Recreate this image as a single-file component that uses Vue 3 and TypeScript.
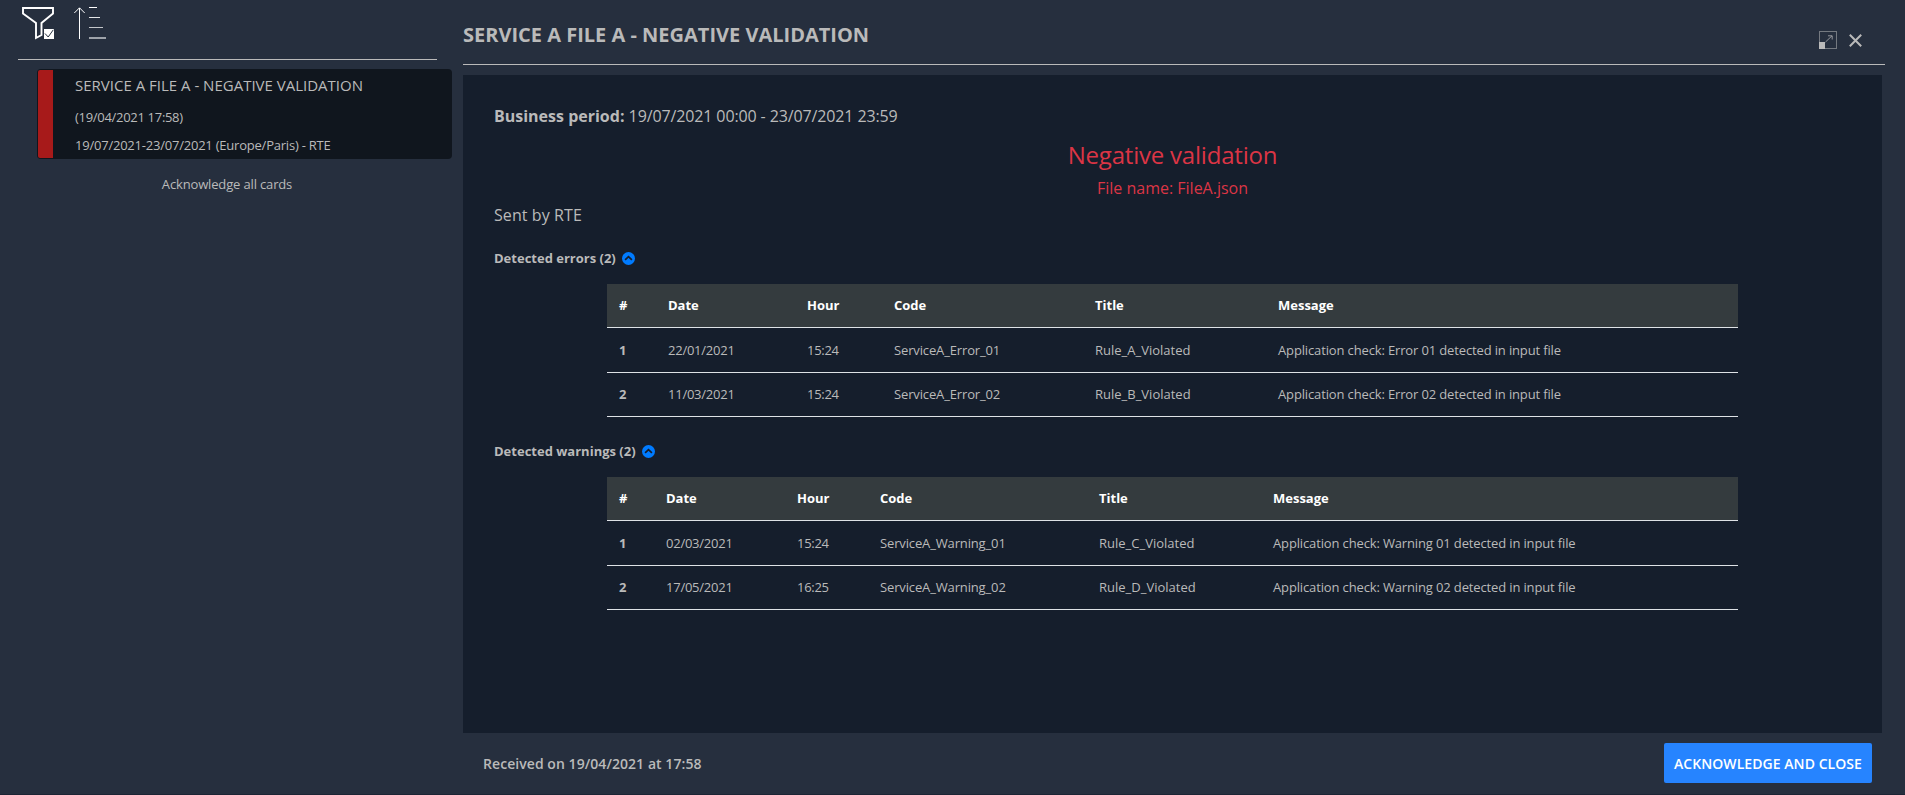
<script setup lang="ts">
import { ref } from 'vue'

interface Row {
  date: string
  hour: string
  code: string
  title: string
  message: string
}

interface Section {
  key: string
  label: string
  rows: Row[]
}

const headings: string[] = ['#', 'Date', 'Hour', 'Code', 'Title', 'Message']

const sections: Section[] = [
  {
    key: 'errors',
    label: 'Detected errors',
    rows: [
      { date: '22/01/2021', hour: '15:24', code: 'ServiceA_Error_01', title: 'Rule_A_Violated', message: 'Application check: Error 01 detected in input file' },
      { date: '11/03/2021', hour: '15:24', code: 'ServiceA_Error_02', title: 'Rule_B_Violated', message: 'Application check: Error 02 detected in input file' },
    ],
  },
  {
    key: 'warnings',
    label: 'Detected warnings',
    rows: [
      { date: '02/03/2021', hour: '15:24', code: 'ServiceA_Warning_01', title: 'Rule_C_Violated', message: 'Application check: Warning 01 detected in input file' },
      { date: '17/05/2021', hour: '16:25', code: 'ServiceA_Warning_02', title: 'Rule_D_Violated', message: 'Application check: Warning 02 detected in input file' },
    ],
  },
]

const open = ref<Record<string, boolean>>({ errors: true, warnings: true })

function toggle(key: string): void {
  open.value[key] = !open.value[key]
}
</script>

<template>
  <div class="app">
    <aside class="feed">
      <div class="tools">
        <svg class="filter" width="32" height="33" viewBox="0 0 32 33">
          <path d="M1 1H31V6.5L19.5 16V28L14 31V16L1 6.5Z" fill="none" stroke="#fff" stroke-width="1.9" />
          <rect x="22" y="22" width="10" height="10" fill="#fff" />
          <path d="M23 26.5L26.2 30L31.3 22.8" fill="none" stroke="#262f3e" stroke-width="1" />
        </svg>
        <svg class="sort" width="32" height="33" viewBox="0 0 32 33">
          <path d="M5.5 32V1M0.3 6L5.5 0.8L10.7 6" fill="none" stroke="#fff" stroke-width="1" />
          <path d="M15 0.5H23" stroke="#fff" />
          <path d="M15 10.5H26" stroke="#e4e6e8" />
          <path d="M15 20.5H29" stroke="#c3c6ca" />
          <path d="M15 31H32" stroke="#9ea3aa" stroke-width="2" />
        </svg>
      </div>
      <article class="card">
        <div class="severity"></div>
        <div class="card-text">
          <div class="card-title">SERVICE A FILE A - NEGATIVE VALIDATION</div>
          <div class="card-date">(19/04/2021 17:58)</div>
          <div class="card-period">19/07/2021-23/07/2021 (Europe/Paris) - RTE</div>
        </div>
      </article>
      <div class="ack-all">Acknowledge all cards</div>
    </aside>

    <main class="detail">
      <header class="detail-head">
        <h1>SERVICE A FILE A - NEGATIVE VALIDATION</h1>
        <div class="window-tools">
          <svg width="18" height="18" viewBox="0 0 18 18">
            <rect x="0.5" y="0.5" width="17" height="17" fill="none" stroke="#747980" />
            <rect x="0" y="11" width="6" height="7" fill="#bababa" />
            <path d="M6.5 11L13 4.8M9 4.8H13.2V8.5" fill="none" stroke="#a0a3a6" stroke-width="0.9" />
          </svg>
          <svg class="close" width="13" height="13" viewBox="0 0 13 13">
            <path d="M0.8 0.8L12.2 12.2M12.2 0.8L0.8 12.2" stroke="#bababa" stroke-width="2" />
          </svg>
        </div>
      </header>

      <section class="content">
        <div class="period"><b>Business period:</b> <span>19/07/2021 00:00 - 23/07/2021 23:59</span></div>
        <div class="verdict">Negative validation</div>
        <div class="file">File name: FileA.json</div>
        <div class="sender">Sent by RTE</div>

        <div v-for="s in sections" :key="s.key" class="group" :class="s.key">
          <div class="group-head" @click="toggle(s.key)">
            <span>{{ s.label }} ({{ s.rows.length }})</span>
            <svg width="13" height="13" viewBox="0 0 13 13">
              <circle cx="6.5" cy="6.5" r="6.5" fill="#007bff" />
              <path d="M3.1 7.9L6.5 4.6L9.9 7.9" fill="none" stroke="#151e2c" stroke-width="1.7" />
            </svg>
          </div>
          <table v-if="open[s.key]">
            <colgroup>
              <col v-for="(h, i) in headings" :key="h" :class="'c' + i" />
            </colgroup>
            <thead>
              <tr><th v-for="h in headings" :key="h">{{ h }}</th></tr>
            </thead>
            <tbody>
              <tr v-for="(r, i) in s.rows" :key="r.code">
                <th>{{ i + 1 }}</th>
                <td class="date">{{ r.date }}</td>
                <td class="hour">{{ r.hour }}</td>
                <td class="code">{{ r.code }}</td>
                <td>{{ r.title }}</td>
                <td class="message">{{ r.message }}</td>
              </tr>
            </tbody>
          </table>
        </div>
      </section>

      <footer class="detail-foot">
        <span class="received">Received on 19/04/2021 at 17:58</span>
        <button type="button">ACKNOWLEDGE AND CLOSE</button>
      </footer>
    </main>
  </div>
</template>

<style>
body {
  margin: 0;
  background: #262f3e;
}
</style>

<style scoped>
* {
  box-sizing: border-box;
}
.app {
  display: flex;
  height: 795px;
  overflow: hidden;
  background: #262f3e;
  border-bottom: 1px solid #1c2434;
  color: #bababa;
  font-family: 'Open Sans', 'Noto Sans', sans-serif;
  font-size: 13px;
}
.feed {
  width: 463px;
  padding-left: 18px;
}
.tools {
  display: flex;
  width: 419px;
  height: 53px;
  margin-top: 7px;
  padding-left: 4px;
  border-bottom: 1px solid #bababa;
}
.sort {
  margin-left: 20px;
}
.card {
  display: flex;
  width: 415px;
  height: 90px;
  margin: 9px 0 0 19px;
  padding: 1px;
  background: #10161e;
  border-radius: 4px;
}
.severity {
  width: 15px;
  background: #a71a1a;
  border-radius: 2px 0 0 2px;
}
.card-text {
  padding-left: 22px;
  white-space: nowrap;
}
.card-title {
  height: 33px;
  line-height: 30px;
  font-size: 15px;
}
.card-date,
.card-period {
  height: 28px;
  line-height: 28px;
}
.card-date {
  letter-spacing: -0.3px;
}
.card-period {
  letter-spacing: -0.22px;
}
.ack-all {
  width: 418px;
  margin-top: 15px;
  line-height: 20px;
  letter-spacing: -0.15px;
  text-align: center;
}
.detail {
  display: flex;
  flex-direction: column;
  width: 1422px;
}
.detail-head {
  display: flex;
  justify-content: space-between;
  height: 65px;
  border-bottom: 1px solid #bababa;
}
h1 {
  margin: 20px 0 0;
  font-size: 20px;
  line-height: 29px;
  font-weight: 700;
}
.window-tools {
  display: flex;
  align-items: center;
  gap: 12px;
  height: 18px;
  margin: 31px 23px 0 0;
}
.close {
  margin-top: 1px;
}
.content {
  width: 1419px;
  height: 658px;
  margin-top: 10px;
  padding: 27px 31px 0;
  background: #151e2c;
}
.period {
  height: 38px;
  font-size: 16px;
  line-height: 28px;
}
.period span {
  letter-spacing: -0.12px;
}
.verdict {
  height: 32px;
  color: #dc3545;
  font-size: 24px;
  line-height: 29px;
  letter-spacing: -0.2px;
  text-align: center;
}
.file {
  height: 28px;
  color: #dc3545;
  font-size: 16px;
  line-height: 32px;
  text-align: center;
}
.sender {
  height: 28px;
  font-size: 16px;
  line-height: 30px;
  letter-spacing: 0.08px;
}
.group-head {
  display: flex;
  align-items: center;
  gap: 6px;
  height: 20px;
  font-weight: 700;
  line-height: 20px;
}
.group-head svg {
  margin-top: 1px;
}
.group {
  height: 193px;
  padding-top: 20px;
}
table {
  width: 1131px;
  margin: 16px 0 0 113px;
  border-collapse: separate;
  border-spacing: 0;
  table-layout: fixed;
}
th,
td {
  height: 44px;
  padding: 11px 12px 0;
  border-bottom: 1px solid #dee2e6;
  text-align: left;
  vertical-align: top;
  line-height: 20px;
  white-space: nowrap;
}
thead th {
  background: #343b3e;
  color: #fff;
}
tbody tr:first-child > * {
  height: 45px;
  padding-top: 12px;
}
.date {
  letter-spacing: -0.24px;
}
.hour {
  letter-spacing: -0.3px;
}
.code,
.message {
  letter-spacing: -0.14px;
}
.errors .c0 { width: 49px; }
.errors .c1 { width: 139px; }
.errors .c2 { width: 87px; }
.errors .c3 { width: 201px; }
.errors .c4 { width: 183px; }
.warnings .c0 { width: 47px; }
.warnings .c1 { width: 131px; }
.warnings .c2 { width: 83px; }
.warnings .c3 { width: 219px; }
.warnings .c4 { width: 174px; }
.detail-foot {
  display: flex;
  justify-content: space-between;
  padding: 10px 13px 0 20px;
}
.received {
  font-size: 14px;
  font-weight: 600;
  line-height: 41px;
  letter-spacing: 0.06px;
}
button {
  width: 208px;
  height: 40px;
  padding: 1px 0 0;
  border: 0;
  border-radius: 2px;
  background: #2684ff;
  color: #fff;
  font-family: inherit;
  font-size: 14px;
  font-weight: 600;
  line-height: 39px;
  letter-spacing: 0.06px;
}
</style>
